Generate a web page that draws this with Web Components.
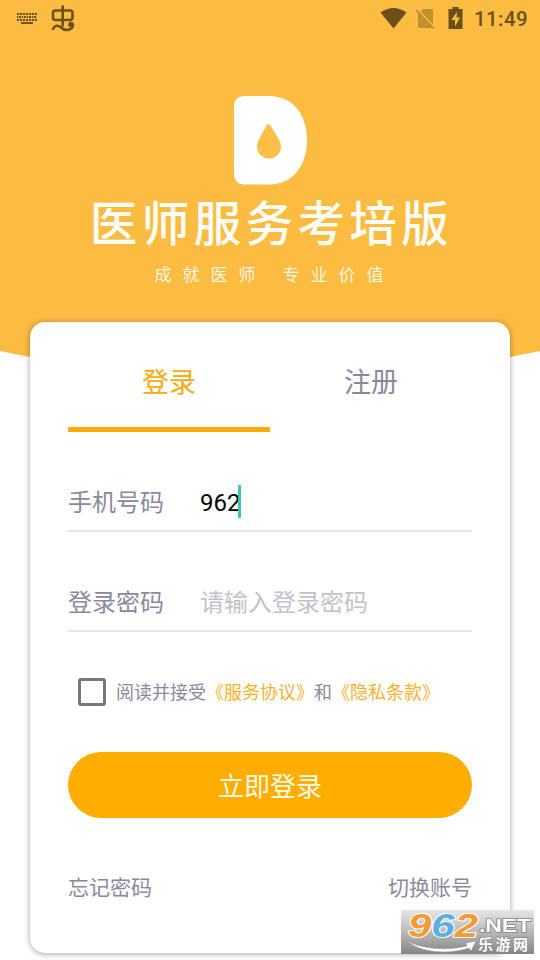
<!DOCTYPE html>
<html lang="zh-CN">
<head>
<meta charset="utf-8">
<title>登录</title>
<style>
body{margin:0;font-family:"Noto Sans CJK SC",sans-serif;background:#fff}
</style>
</head>
<body>
<login-page></login-page>
<script>
function define(name, html) {
  const t = document.createElement('template');
  t.innerHTML = html;
  customElements.define(name, class extends HTMLElement {
    constructor() {
      super();
      this.attachShadow({mode: 'open'}).append(t.content.cloneNode(true));
    }
  });
}

define('status-bar', `
<style>
:host{display:flex;align-items:center;height:36px;box-sizing:border-box;padding:0 12px 0 16px;color:#6b4f1d}
svg{display:block;flex:none}
.gap{flex:1}
.bug{margin-left:12px}
.sim{margin-left:9px}.bat{margin-left:12px}
time{font:500 20.5px/24px Roboto,sans-serif;margin-left:11px;letter-spacing:.4px;width:54px;white-space:nowrap;padding-top:2px}
</style>
<svg width="22" height="14" viewBox="0 0 22 14"><g stroke="currentColor" stroke-width="1.9" fill="none"><path d="M1 3h20" stroke-dasharray="2.2 .8"/><path d="M1 6h20" stroke-dasharray="1.2 .8 2.2 .8"/><path d="M1 9h20" stroke-dasharray="2.2 .8"/><path d="M5 12h12"/></g></svg>
<svg class="bug" width="26" height="28" viewBox="50 4 26 28"><g fill="none" stroke="currentColor" stroke-width="2.6" stroke-linecap="round" stroke-linejoin="round"><path d="M55 10.500h15q2.500 0 2.500 2.500v4.500q0 2.500-2.500 2.500H55.500q-2.500 0-2.500-2.500v-4.500q0-2.500 2.500-2.500M62.700 6.500v19M53 29c2-4 5-4 8-1.500 4 4 12 2.500 12-2.500"/></g><circle cx="71" cy="24.500" r="2.800" fill="currentColor"/></svg>
<span class="gap"></span>
<svg width="27" height="21" viewBox="380 7 27 21"><path fill="currentColor" d="M380.500 11.500Q393.500 2.500 406.500 11.500L393.500 27.500Z"/></svg>
<svg class="sim" width="20" height="21" viewBox="416 7 20 21"><path fill="#bf902f" d="M423 8h8q2 0 2 2v16q0 1-1 1h-12q-2 0-2-2V13z"/><path d="M417 8l18 18.500" stroke="#fcbb41" stroke-width="1.600"/><path d="M416 9l18 18.500" stroke="#bf902f" stroke-width="1.700"/></svg>
<svg class="bat" width="15" height="22" viewBox="448.500 6 15 22"><path fill="currentColor" d="M453 6h6v2h4v20h-14V8h4z"/><path fill="#fcbb41" d="M457.500 10.500L452 19h3.500v6.500l5-9h-3.500z"/></svg>
<time>11:49</time>
`);

define('brand-header', `
<style>
:host{display:flex;flex-direction:column;align-items:center;height:357px;background:#fcbb41;color:#fff;clip-path:polygon(0 0,100% 0,100% 351px,510px 357px,30px 357px,0 351px)}
status-bar{align-self:stretch}
svg{display:block;margin-top:60px}
h1{margin:6px 0 0;font:500 47.500px/60px "Noto Sans CJK SC",sans-serif;letter-spacing:4.400px;padding-left:3px;white-space:nowrap;color:#fffdf6}
p{margin:11px 0 0;font-size:17px;line-height:24px;letter-spacing:11px;padding-left:9px;white-space:pre;color:#fff6df}
p span{margin-left:16px}
</style>
<status-bar></status-bar>
<svg width="74" height="89" viewBox="233 96 74 89"><path fill="#fff" d="M245 96h24c25 0 38 20 38 44s-13 44.500-38 44.500h-24q-11 0-11-11V107q0-11 11-11z"/><path fill="#fcbf47" d="M266.500 125.500q2-3 4 0C273 131 281 140 281 146.500a12 12 0 0 1-24 0C257 140 264 131 266.500 125.500z"/></svg>
<h1>医师服务考培版</h1>
<p>成就医师<span>专业价值</span></p>
`);

define('auth-tabs', `
<style>
:host{display:grid;grid-template-columns:1fr 1fr;height:110px;font-size:27px;line-height:118px;text-align:center;color:#8c889c}
::slotted([selected]){color:#f9ab0c;border-bottom:5px solid #f9ab0c}
::slotted(*){box-sizing:border-box;height:110px}
</style><slot></slot>
`);

define('form-field', `
<style>
:host{display:flex;align-items:center;box-sizing:border-box;height:100px;padding-top:40px;border-bottom:2px solid #e6e6e6;font-size:24px;line-height:34px;color:#8c889c}
.label{width:132px}
.value{display:flex;align-items:center}
</style>
<span class="label"><slot name="label"></slot></span><span class="value"><slot></slot></span>
`);

define('text-caret', `
<style>:host{display:block;width:3px;height:33px;background:#41c3ad;margin-left:-2px}</style>
`);

define('agree-row', `
<style>
:host{display:flex;align-items:center;height:36px;margin-top:42px;padding-left:10px;font-size:18px;color:#8c889c;white-space:nowrap}
i{box-sizing:border-box;width:28px;height:28px;border:3px solid #787878;border-radius:3px;margin-right:10px}
span{padding-bottom:2px}
::slotted(b){font-weight:400;color:#fcb12a}
</style><i></i><span><slot></slot></span>
`);

define('primary-button', `
<style>
:host{display:block;height:66px;margin-top:42px;border-radius:33px;background:#ffad00;color:#fffbea;font-size:26px;line-height:65px;text-align:center}
</style><slot></slot>
`);

define('login-card', `
<style>
:host{display:block;box-sizing:border-box;width:480px;height:631px;margin:-35px auto 0;padding:0 38px;position:relative;background:#fff;border-radius:15px;box-shadow:0 1px 6px rgba(0,0,0,.36)}
.black{font:24px/34px Roboto,sans-serif;color:#000;padding-top:3px}
.hint{color:#c3c1ca}
.links{display:flex;justify-content:space-between;margin-top:52px;font-size:21px;line-height:32px;color:#8c889c}
</style>
<auth-tabs><div selected>登录</div><div>注册</div></auth-tabs>
<form-field><span slot="label">手机号码</span><span class="black">962</span><text-caret></text-caret></form-field>
<form-field><span slot="label">登录密码</span><span class="hint">请输入登录密码</span></form-field>
<agree-row>阅读并接受<b>《服务协议》</b>和<b>《隐私条款》</b></agree-row>
<primary-button>立即登录</primary-button>
<div class="links"><span>忘记密码</span><span>切换账号</span></div>
`);
customElements.get('login-card');

define('site-watermark', `
<style>
:host{display:block;position:absolute;left:401px;top:910px;width:133px;height:44px;background:linear-gradient(#e6e6e6,#b9b9b9 50%,#858585)}
svg{display:block;overflow:visible}
text{paint-order:stroke;stroke-linejoin:round}
</style>
<svg width="133" height="44" viewBox="401 910 133 44">
<g font-family="Liberation Sans,sans-serif" font-weight="700" font-style="italic" font-size="33" stroke="#fff" stroke-width="2">
<text x="408" y="937" textLength="70" lengthAdjust="spacingAndGlyphs"><tspan fill="#f59a35">9</tspan><tspan fill="#5caee3">6</tspan><tspan fill="#f59a35">2</tspan></text></g>
<text x="479" y="931.500" font-family="Liberation Sans,sans-serif" font-weight="700" font-size="17.500" textLength="52" lengthAdjust="spacingAndGlyphs" fill="#fff" stroke="#888" stroke-width="1.600">.NET</text>
<text x="478" y="949.500" font-family="Noto Sans CJK SC,sans-serif" font-weight="700" font-size="15" textLength="50" fill="#fff" stroke="#888" stroke-width="1.400">乐游网</text>
<path d="M407 941C422 949 447 951 467 946L466 943L476 941L471 951L469 948C448 955 421 953 407 941z" fill="#fff" stroke="#999" stroke-width=".6"/>
</svg>
`);

define('login-page', `
<style>
:host{display:block;position:relative;width:540px;height:960px;overflow:hidden;background:#fff}
</style>
<brand-header></brand-header>
<login-card></login-card>
<site-watermark></site-watermark>
`);
</script>
</body>
</html>
